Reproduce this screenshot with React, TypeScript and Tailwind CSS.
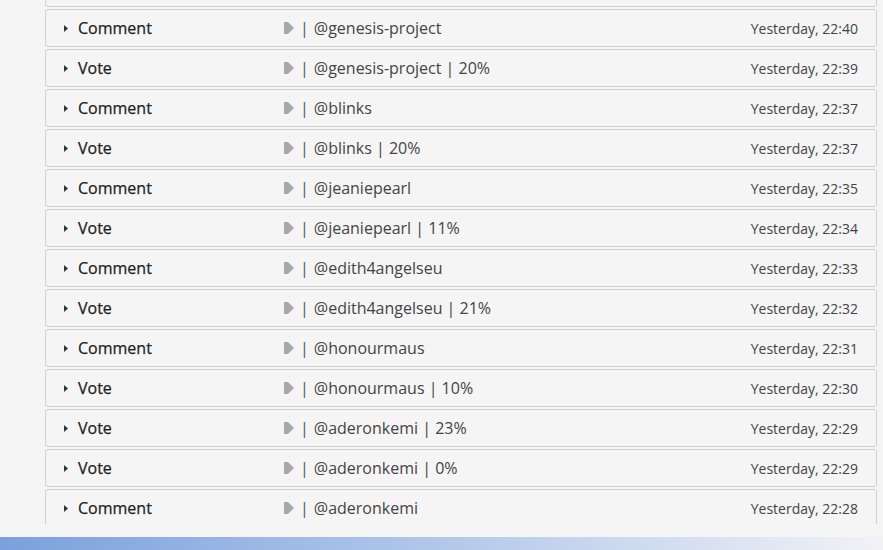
type Activity = {
  kind: "Comment" | "Vote";
  target: string;
  time: string;
};

const ITEMS: Activity[] = [
  { kind: "Vote", target: "@genesis-project | 20%", time: "Yesterday, 22:41" },
  { kind: "Comment", target: "@genesis-project", time: "Yesterday, 22:40" },
  { kind: "Vote", target: "@genesis-project | 20%", time: "Yesterday, 22:39" },
  { kind: "Comment", target: "@blinks", time: "Yesterday, 22:37" },
  { kind: "Vote", target: "@blinks | 20%", time: "Yesterday, 22:37" },
  { kind: "Comment", target: "@jeaniepearl", time: "Yesterday, 22:35" },
  { kind: "Vote", target: "@jeaniepearl | 11%", time: "Yesterday, 22:34" },
  { kind: "Comment", target: "@edith4angelseu", time: "Yesterday, 22:33" },
  { kind: "Vote", target: "@edith4angelseu | 21%", time: "Yesterday, 22:32" },
  { kind: "Comment", target: "@honourmaus", time: "Yesterday, 22:31" },
  { kind: "Vote", target: "@honourmaus | 10%", time: "Yesterday, 22:30" },
  { kind: "Vote", target: "@aderonkemi | 23%", time: "Yesterday, 22:29" },
  { kind: "Vote", target: "@aderonkemi | 0%", time: "Yesterday, 22:29" },
  { kind: "Comment", target: "@aderonkemi", time: "Yesterday, 22:28" },
];

function ActivityRow({ item }: { item: Activity }) {
  return (
    <div className="flex items-center h-[38px] shrink-0 rounded-[3px] border border-[#cfcfcf] bg-[#f5f5f5] pl-[18px] pr-[18px]">
      {/* caret */}
      <svg width="4" height="7" viewBox="0 0 4 7" className="shrink-0">
        <path d="M0 0 L4 3.5 L0 7 Z" fill="#333" />
      </svg>
      <span className="ml-[10px] w-[206px] shrink-0 text-[16px] font-medium text-[#1f1f1f] [-webkit-text-stroke:0.25px_#1f1f1f]">
        {item.kind}
      </span>
      {/* play icon */}
      <svg width="10" height="12" viewBox="0 0 10 12" className="shrink-0">
        <path d="M0 0 H4 L10 6 L4 12 H0 Z" fill="#a9a9a9" />
      </svg>
      <span className="ml-[6px] text-[16px] text-[#555]">|</span>
      <span className="ml-[5px] flex-1 text-[16px] text-[#444]">{item.target}</span>
      <span className="text-[14px] text-[#444]">{item.time}</span>
    </div>
  );
}

export default function App() {
  return (
    <div
      className="w-[883px] h-[550px] flex flex-col bg-[#f5f5f5] overflow-hidden"
      style={{ fontFamily: '"Open Sans", "Liberation Sans", sans-serif' }}
    >
      {/* scrolled activity list */}
      <div className="h-[524px] overflow-hidden pl-[45px] pr-[6px]">
        <div className="flex flex-col gap-[2px] -mt-[31px]">
          {ITEMS.map((item, i) => (
            <ActivityRow key={i} item={item} />
          ))}
        </div>
      </div>
      <div className="h-[13px]" />
      <div className="h-[13px] bg-gradient-to-r from-[#7ba0dc] via-[#b2c8ea] to-[#f2f2f6]" />
    </div>
  );
}
